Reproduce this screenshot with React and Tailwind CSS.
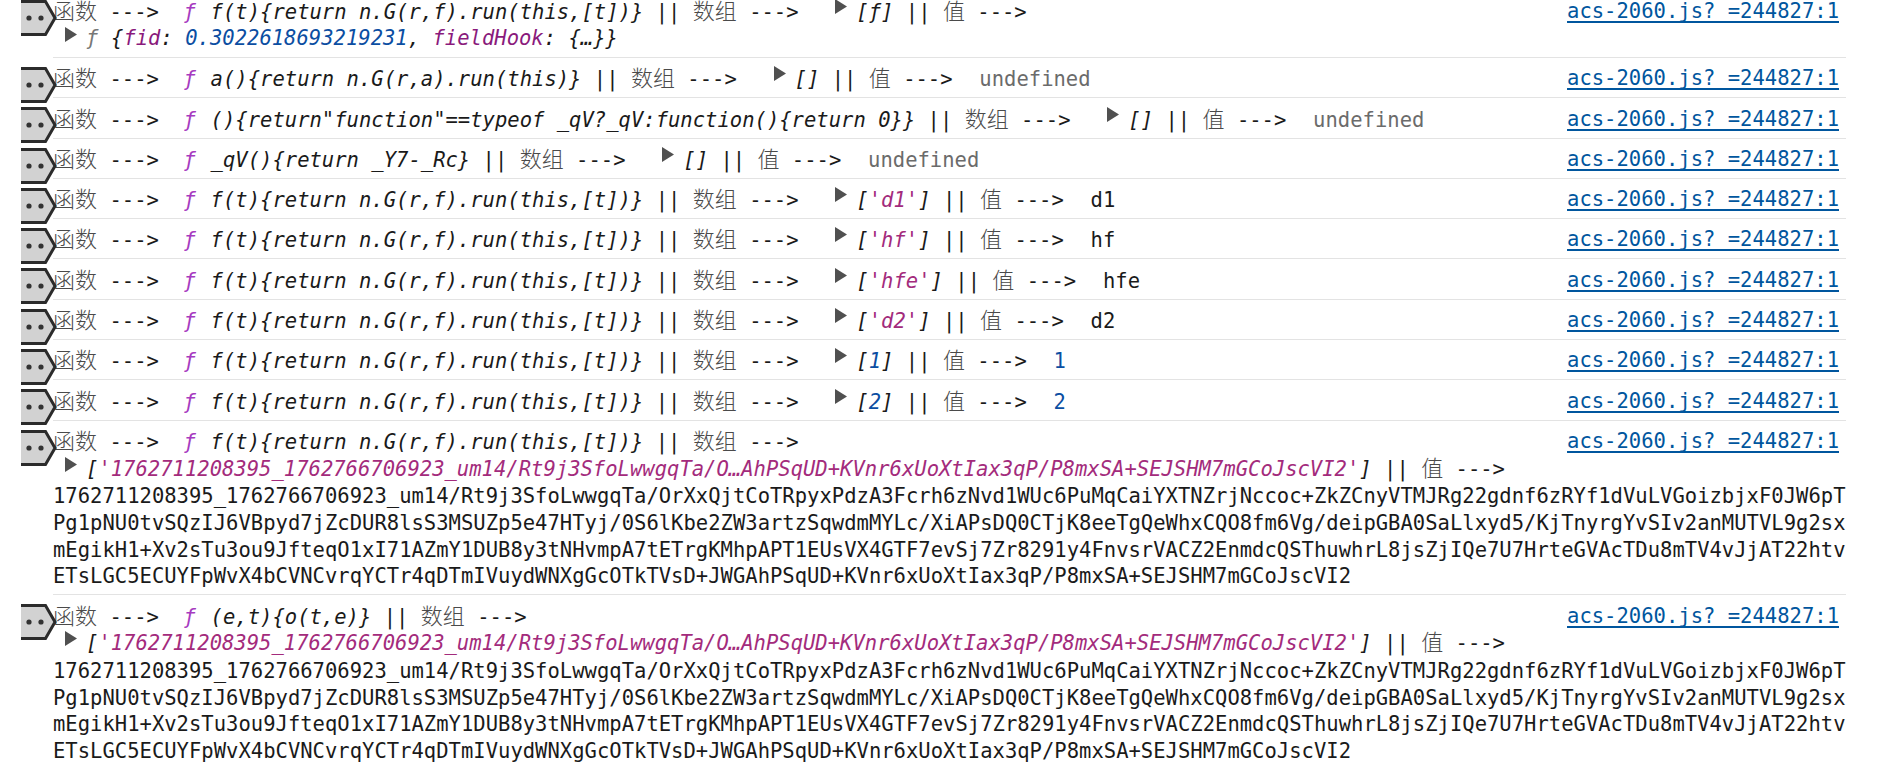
const L1 = "1762711208395_1762766706923_um14/Rt9j3SfoLwwgqTa/OrXxQjtCoTRpyxPdzA3Fcrh6zNvd1WUc6PuMqCaiYXTNZrjNccoc+ZkZCnyVTMJRg22gdnf6zRYf1dVuLVGoizbjxF0JW6pT";
const L2 = "Pg1pNU0tvSQzIJ6VBpyd7jZcDUR8lsS3MSUZp5e47HTyj/0S6lKbe2ZW3artzSqwdmMYLc/XiAPsDQ0CTjK8eeTgQeWhxCQO8fm6Vg/deipGBA0SaLlxyd5/KjTnyrgYvSIv2anMUTVL9g2sx";
const L3 = "mEgikH1+Xv2sTu3ou9JfteqO1xI71AZmY1DUB8y3tNHvmpA7tETrgKMhpAPT1EUsVX4GTF7evSj7Zr8291y4FnvsrVACZ2EnmdcQSThuwhrL8jsZjIQe7U7HrteGVAcTDu8mTV4vJjAT22htv";
const L4 = "ETsLGC5ECUYFpWvX4bCVNCvrqYCTr4qDTmIVuydWNXgGcOTkTVsD+JWGAhPSqUD+KVnr6xUoXtIax3qP/P8mxSA+SEJSHM7mGCoJscVI2";
const ELL = "'1762711208395_1762766706923_um14/Rt9j3SfoLwwgqTa/O…AhPSqUD+KVnr6xUoXtIax3qP/P8mxSA+SEJSHM7mGCoJscVI2'";
const FT = "f(t){return n.G(r,f).run(this,[t])}";

function Cn({ children }) {
  return <span className="font-['Noto_Sans_CJK_SC','Noto_Sans_CJK_JP',sans-serif] font-light text-[22px] leading-none text-[#4a4a4a]">{children}</span>;
}

function Tri({ className }) {
  return (
    <svg width="12" height="15" viewBox="0 0 12 15" className={className}>
      <path d="M0 0L12 7.5L0 15Z" fill="#505050" />
    </svg>
  );
}

function Badge() {
  return (
    <svg width="36" height="36" viewBox="0 0 36 36" className="absolute left-[-32px] top-[9px]">
      <path d="M-4 1.5H24.5L34 18L24.5 34.5H-4Z" fill="#d2d2d2" stroke="#2b2b2b" strokeWidth="3" />
      <circle cx="8" cy="18" r="2.6" fill="#333" />
      <circle cx="20" cy="18" r="2.6" fill="#333" />
    </svg>
  );
}

function Fn({ children }) {
  return (
    <span className="italic">
      <span className="inline-block w-[27px] text-[#a63bc0]">ƒ</span>
      {children}
    </span>
  );
}

function ArrowTri() {
  return (
    <span className="inline-block w-[33px] h-[1px] relative align-baseline">
      <Tri className="absolute left-[12px] top-[-19px]" />
    </span>
  );
}

function Str({ children }) {
  return <span className="text-[#a32b7c]">{children}</span>;
}

function Num({ children }) {
  return <span className="text-[#0b4ea2]">{children}</span>;
}

function Head({ fn, arr, val }) {
  return (
    <span>
      <Cn>函数</Cn>{" ---> "}{" "}<Fn>{fn}</Fn>{" || "}<Cn>数组</Cn>{" ---> "}
      {arr !== undefined && (
        <>
          {" "}
          <ArrowTri />
          <span className="italic">{arr}</span>
          {" || "}<Cn>值</Cn>{" ---> "}{val !== undefined && <span className="ml-[2px]">{" "}{val}</span>}
        </>
      )}
    </span>
  );
}

function Link() {
  return <a className="shrink-0 mr-[7px] text-[#00569e] underline underline-offset-[3px] decoration-[1.5px] [text-decoration-skip-ink:none]">acs-2060.js?_=244827:1</a>;
}

function Row({ head, children, first }) {
  return (
    <div className={"relative border-b border-[#e3e3e3] pt-[7.2px] pb-[5.3px] " + (first ? "mt-[-9px]" : "")}>
      <Badge />
      <div className="flex justify-between whitespace-pre h-[26.8px]">
        <div>{head}</div>
        <Link />
      </div>
      {children}
    </div>
  );
}

function Long() {
  return (
    <>
      <div className="whitespace-pre flex h-[28.4px]">
        <Tri className="ml-[12px] mr-[9px] mt-[2px] shrink-0" />
        <span><span className="italic">[<Str>{ELL}</Str>]</span>{" || "}<Cn>值</Cn>{" ---> "}</span>
      </div>
      <div>{L1}</div>
      <div>{L2}</div>
      <div>{L3}</div>
      <div className="mb-[-1px]">{L4}</div>
    </>
  );
}

export default function App() {
  const und = <span className="text-[#6b6b6b]">undefined</span>;
  return (
    <div className="h-[768px] overflow-hidden bg-white">
      <div className="ml-[53px] w-[1793px] font-['DejaVu_Sans_Mono',monospace] text-[20.5px] leading-[26.8px] tracking-[0.02px] text-[#1a1a1a] whitespace-pre">
        <Row first head={<Head fn={FT} arr="[ƒ]" />}>
          <div className="flex whitespace-pre h-[26.8px]">
            <Tri className="ml-[12px] mr-[9px] mt-[2px] shrink-0" />
            <span className="italic">
              <span className="text-[#777] inline-block w-[25px]">ƒ</span>
              {"{"}<span className="text-[#8a1a7c]">fid</span>{": "}<Num>0.3022618693219231</Num>{", "}<span className="text-[#8a1a7c]">fieldHook</span>{": {…}}"}
            </span>
          </div>
        </Row>
        <Row head={<Head fn="a(){return n.G(r,a).run(this)}" arr="[]" val={und} />} />
        <Row head={<Head fn={'(){return"function"==typeof _qV?_qV:function(){return 0}}'} arr="[]" val={und} />} />
        <Row head={<Head fn="_qV(){return _Y7-_Rc}" arr="[]" val={und} />} />
        <Row head={<Head fn={FT} arr={<>[<Str>'d1'</Str>]</>} val="d1" />} />
        <Row head={<Head fn={FT} arr={<>[<Str>'hf'</Str>]</>} val="hf" />} />
        <Row head={<Head fn={FT} arr={<>[<Str>'hfe'</Str>]</>} val="hfe" />} />
        <Row head={<Head fn={FT} arr={<>[<Str>'d2'</Str>]</>} val="d2" />} />
        <Row head={<Head fn={FT} arr={<>[<Num>1</Num>]</>} val={<Num>1</Num>} />} />
        <Row head={<Head fn={FT} arr={<>[<Num>2</Num>]</>} val={<Num>2</Num>} />} />
        <Row head={<Head fn={FT} />}>
          <Long />
        </Row>
        <Row head={<Head fn="(e,t){o(t,e)}" />}>
          <Long />
        </Row>
      </div>
    </div>
  );
}
